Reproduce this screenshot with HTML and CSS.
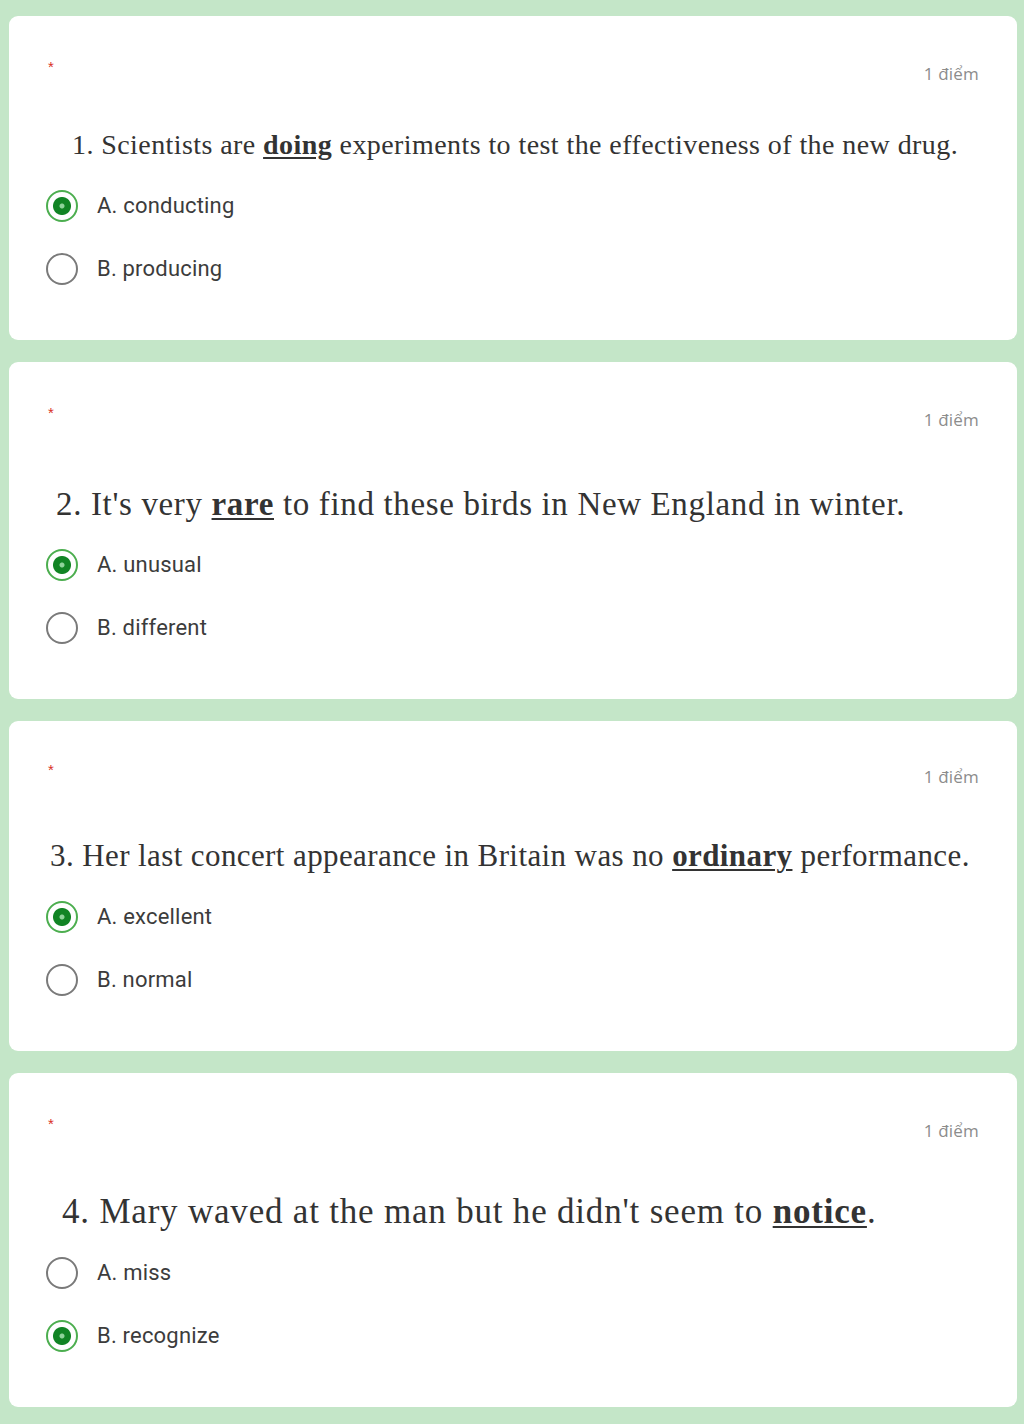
FILE: index.html
```html
<!DOCTYPE html>
<html lang="vi">
<head>
<meta charset="utf-8">
<title>Quiz</title>
<link rel="stylesheet" href="styles.css">
</head>
<body>
<main class="page">
  <section class="card c1">
    <div class="head"><span class="req">*</span><span class="pts">1 điểm</span></div>
    <p class="question">1. Scientists are <b class="u">doing</b> experiments to test the effectiveness of the new drug.</p>
    <ul class="options">
      <li class="opt"><span class="radio checked"></span><span class="label">A. conducting</span></li>
      <li class="opt"><span class="radio"></span><span class="label">B. producing</span></li>
    </ul>
  </section>
  <section class="card c2">
    <div class="head"><span class="req">*</span><span class="pts">1 điểm</span></div>
    <p class="question">2. It's very <b class="u">rare</b> to find these birds in New England in winter.</p>
    <ul class="options">
      <li class="opt"><span class="radio checked"></span><span class="label">A. unusual</span></li>
      <li class="opt"><span class="radio"></span><span class="label">B. different</span></li>
    </ul>
  </section>
  <section class="card c3">
    <div class="head"><span class="req">*</span><span class="pts">1 điểm</span></div>
    <p class="question">3. Her last concert appearance in Britain was no <b class="u">ordinary</b> performance.</p>
    <ul class="options">
      <li class="opt"><span class="radio checked"></span><span class="label">A. excellent</span></li>
      <li class="opt"><span class="radio"></span><span class="label">B. normal</span></li>
    </ul>
  </section>
  <section class="card c4">
    <div class="head"><span class="req">*</span><span class="pts">1 điểm</span></div>
    <p class="question">4. Mary waved at the man but he didn't seem to <b class="u">notice</b>.</p>
    <ul class="options">
      <li class="opt"><span class="radio"></span><span class="label">A. miss</span></li>
      <li class="opt"><span class="radio checked"></span><span class="label">B. recognize</span></li>
    </ul>
  </section>
</main>
</body>
</html>
```
FILE: styles.css
```css
html, body {
  margin: 0;
  padding: 0;
  background: #c4e6c8;
}
.page {
  padding: 16px 7px 10px 9px;
  display: flex;
  flex-direction: column;
  gap: 22px;
}
.card {
  background: #ffffff;
  border-radius: 9px;
  padding: 37px 38px 40px 37px;
}
.card.c3 {
  padding-top: 35px;
}
.head {
  display: flex;
  justify-content: space-between;
  align-items: flex-start;
  height: 40px;
}
.req {
  color: #d93025;
  font-family: "Liberation Sans", Arial, sans-serif;
  font-size: 15px;
  line-height: 28px;
  margin-left: 2px;
}
.pts {
  color: #8c8c8c;
  font-family: "Open Sans", "Noto Sans", sans-serif;
  font-size: 17px;
  line-height: 28px;
  margin-top: 7px;
  letter-spacing: 0.2px;
}
.question {
  margin: 33px 0 0 0;
  font-family: "Liberation Serif", "Times New Roman", serif;
  color: #333333;
  line-height: 40px;
  white-space: nowrap;
}
.u {
  text-decoration: underline;
  text-decoration-thickness: 1.5px;
  text-underline-offset: 3px;
}
.c1 .question { font-size: 28px; letter-spacing: 0.42px; padding-left: 26px; margin-top: 32px; }
.c2 .question { font-size: 33px; letter-spacing: 0.65px; padding-left: 10px; margin-top: 45px; }
.c3 .question { font-size: 31px; letter-spacing: 0.4px; padding-left: 4px; margin-top: 40px; }
.c4 .question { font-size: 35px; letter-spacing: 0.8px; padding-left: 16px; margin-top: 42px; }
.options {
  list-style: none;
  margin: 9px 0 0 0;
  padding: 0;
}
.opt {
  display: flex;
  align-items: center;
  height: 63px;
  gap: 19px;
}
.radio {
  box-sizing: border-box;
  width: 32px;
  height: 32px;
  border: 2px solid #7a7a7a;
  border-radius: 50%;
  flex: none;
}
.radio.checked {
  border-color: #4cae4f;
  background: radial-gradient(circle, #8fd39a 0 2px, #118424 3px 8.5px, #ffffff 9.5px);
}
.label {
  font-family: Roboto, "Liberation Sans", Arial, sans-serif;
  font-size: 22px;
  letter-spacing: 0.2px;
  color: #3c3c3c;
}
```
